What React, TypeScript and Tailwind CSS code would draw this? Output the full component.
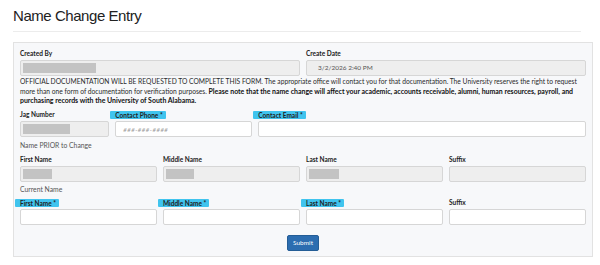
import React from "react";

const body = { fontFamily: "Lato, 'Open Sans', sans-serif" };

function Label({ text, hl }: { text: string; hl?: boolean }) {
  return (
    <div className="h-[9px] leading-[9px] text-[6.5px] font-bold text-[#222] mb-[2px] whitespace-nowrap">
      {hl ? (
        <span className="-ml-[5px] pl-[5px] pr-[3px] py-[0.5px] bg-[#40c4ee] rounded-[1px]">{text}</span>
      ) : (
        text
      )}
    </div>
  );
}

function Input({
  disabled,
  block,
  text,
  placeholder,
}: {
  disabled?: boolean;
  block?: number;
  text?: string;
  placeholder?: string;
}) {
  return (
    <div
      className={`h-[16px] rounded-[2px] border border-[#d6d6d6] flex items-center pl-[2px] ${
        disabled ? "bg-[#eeeeee]" : "bg-white"
      }`}
    >
      {block ? <div className="h-[10px] bg-[#c3c3c3]" style={{ width: block }} /> : null}
      {text ? <span className="pl-[9px] text-[6.5px] text-[#555]">{text}</span> : null}
      {placeholder ? (
        <span className="pl-[5px] text-[6px] italic text-[#999] tracking-[0.5px]">{placeholder}</span>
      ) : null}
    </div>
  );
}

export default function App() {
  return (
    <div className="w-[600px] h-[265px] bg-white overflow-hidden">
      <div className="px-[13px] pt-[7px]">
        <h1
          className="text-[15px] leading-[18px] text-[#222] tracking-[-0.45px]"
          style={{ fontFamily: "'Liberation Sans', Arial, sans-serif" }}
        >
          Name Change Entry
        </h1>
        <div className="mt-[6px] h-px bg-[#ececec] mr-[6px]" />
        <div
          className="mt-[10px] border border-[#e2e2e2] bg-[#f7f8fa] px-[6px] pt-[6px] pb-[5px] w-[580px]"
          style={body}
        >
          <div className="grid grid-cols-12 gap-x-[6px]">
            <div className="col-span-6">
              <Label text="Created By" />
              <Input disabled block={73} />
            </div>
            <div className="col-span-6">
              <Label text="Create Date" />
              <Input disabled text="3/2/2026 2:40 PM" />
            </div>
          </div>
          <div className="mt-[1px] text-[6.7px] leading-[9.5px] text-[#2a2a2a] whitespace-nowrap">
            <div>
              OFFICIAL DOCUMENTATION WILL BE REQUESTED TO COMPLETE THIS FORM. The appropriate office will contact you
              for that documentation. The University reserves the right to request
            </div>
            <div>
              more than one form of documentation for verification purposes.{" "}
              <b className="font-bold text-[#111] text-[6.95px]">
                Please note that the name change will affect your academic, accounts receivable, alumni, human
                resources, payroll, and
              </b>
            </div>
            <div>
              <b className="font-bold text-[#111] text-[6.95px]">
                purchasing records with the University of South Alabama.
              </b>
            </div>
          </div>
          <div className="mt-[4.5px] grid grid-cols-12 gap-x-[6px]">
            <div className="col-span-2">
              <Label text="Jag Number" />
              <Input disabled block={47} />
            </div>
            <div className="col-span-3">
              <Label text="Contact Phone *" hl />
              <Input placeholder="###-###-####" />
            </div>
            <div className="col-span-7">
              <Label text="Contact Email *" hl />
              <Input />
            </div>
          </div>
          <div className="mt-[3.5px] h-[9px] leading-[9px] text-[6.8px] text-[#555]">Name PRIOR to Change</div>
          <div className="mt-[5px] grid grid-cols-12 gap-x-[6px]">
            <div className="col-span-3">
              <Label text="First Name" />
              <Input disabled block={29} />
            </div>
            <div className="col-span-3">
              <Label text="Middle Name" />
              <Input disabled block={28} />
            </div>
            <div className="col-span-3">
              <Label text="Last Name" />
              <Input disabled block={30} />
            </div>
            <div className="col-span-3">
              <Label text="Suffix" />
              <Input disabled />
            </div>
          </div>
          <div className="mt-[3.5px] h-[9px] leading-[9px] text-[6.8px] text-[#555]">Current Name</div>
          <div className="mt-[4px] grid grid-cols-12 gap-x-[6px]">
            <div className="col-span-3">
              <Label text="First Name *" hl />
              <Input />
            </div>
            <div className="col-span-3">
              <Label text="Middle Name *" hl />
              <Input />
            </div>
            <div className="col-span-3">
              <Label text="Last Name *" hl />
              <Input />
            </div>
            <div className="col-span-3">
              <Label text="Suffix" />
              <Input />
            </div>
          </div>
          <div className="mt-[10px] flex justify-center">
            <button
              className="h-[16px] w-[32px] rounded-[2px] bg-[#2c6db0] border border-[#245d96] text-white text-[6.5px] leading-none"
              style={body}
            >
              Submit
            </button>
          </div>
        </div>
      </div>
    </div>
  );
}
